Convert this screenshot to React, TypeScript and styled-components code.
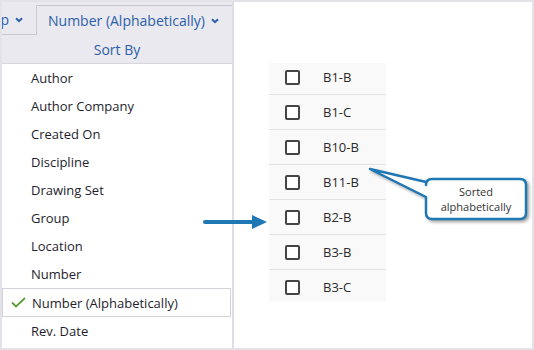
import React from "react";
import styled, { createGlobalStyle, css } from "styled-components";

const BLUE_TEXT = "#2c5faa";
const ARROW_BLUE = "#1f77b4";

const GlobalStyle = createGlobalStyle`
  html, body {
    margin: 0;
    padding: 0;
    background: #ffffff;
  }
  body {
    font-family: "Open Sans", "Liberation Sans", sans-serif;
  }
`;

const sortOptions = [
    "Author",
    "Author Company",
    "Created On",
    "Discipline",
    "Drawing Set",
    "Group",
    "Location",
    "Number",
    "Number (Alphabetically)",
    "Rev. Date",
];

const sheets = ["B1-B", "B1-C", "B10-B", "B11-B", "B2-B", "B3-B", "B3-C"];

const Frame = styled.div`
  position: relative;
  width: 534px;
  height: 350px;
  box-sizing: border-box;
  border: 2px solid #e2e2e8;
  background: #ffffff;
  display: flex;
  overflow: hidden;
`;

const Sidebar = styled.div`
  width: 230px;
  flex: none;
  border-right: 2px solid #dedee4;
  display: flex;
  flex-direction: column;
`;

const Header = styled.div`
  background: #e9e9ef;
  border-bottom: 1px solid #d6d6dc;
  padding-top: 3px;
`;

const TabRow = styled.div`
  display: flex;
  height: 30px;
`;

const Tab = styled.div<{ $active?: boolean }>`
  display: flex;
  align-items: center;
  gap: 6px;
  color: ${BLUE_TEXT};
  font-size: 14px;
  white-space: nowrap;
  overflow: hidden;
  box-sizing: border-box;
  & > * {
    flex: none;
  }
  ${({ $active }) => $active
    ? css`
      flex: 1;
      justify-content: center;
      border-top: 1px solid #c8c8d0;
      padding-right: 2px;
    `
    : css`
      width: 35px;
      flex: none;
      justify-content: flex-end;
      padding-right: 13px;
      border-right: 1px solid #c8c8d0;
      border-bottom: 1px solid #c8c8d0;
    `}
`;

const SortLabel = styled.div`
  height: 28px;
  display: flex;
  align-items: center;
  justify-content: center;
  color: ${BLUE_TEXT};
  font-size: 14px;
`;

const Menu = styled.div`
  display: flex;
  flex-direction: column;
`;

const MenuItem = styled.div<{ $selected?: boolean }>`
  height: 28px;
  box-sizing: border-box;
  display: flex;
  align-items: center;
  padding-left: 8px;
  font-size: 13px;
  color: #1e1e2e;
  ${({ $selected }) => $selected && css`
    border: 1px solid #d2d2da;
    height: 29px;
    margin-right: 1px;
  `}
`;

const CheckSlot = styled.span`
  width: 21px;
  display: flex;
  align-items: center;
`;

const Canvas = styled.div`
  flex: 1;
  padding: 61px 0 0 35px;
`;

const SheetList = styled.div`
  width: 117px;
  height: 239px;
  overflow: hidden;
  background: #f9f9f9;
`;

const SheetRows = styled.div`
  margin-top: -3px;
`;

const SheetRow = styled.div`
  height: 35px;
  box-sizing: border-box;
  border-bottom: 1px solid #e2e2e2;
  display: flex;
  align-items: center;
  padding-left: 16px;
  gap: 23px;
  font-size: 13px;
  color: #2a2a2a;
`;

const Checkbox = styled.span`
  width: 15px;
  height: 15px;
  box-sizing: border-box;
  border: 2px solid #454545;
  border-radius: 2px;
  background: #ffffff;
`;

const PointerArrow = styled.svg`
  position: absolute;
  left: 198px;
  top: 210px;
`;

const CalloutShape = styled.svg`
  position: absolute;
  left: 358px;
  top: 158px;
  overflow: visible;
  filter: drop-shadow(2px 2px 1.5px rgba(0, 0, 0, 0.35));
`;

const CalloutText = styled.div`
  position: absolute;
  left: 424px;
  top: 177px;
  width: 100px;
  height: 40px;
  display: flex;
  flex-direction: column;
  align-items: center;
  justify-content: center;
  font-size: 11px;
  line-height: 15px;
  color: #333333;
`;

const Chevron = () => (
    <svg width="8" height="6" viewBox="0 0 8 6">
        <path d="M1 1.2 L4 4.2 L7 1.2" fill="none" stroke={BLUE_TEXT} strokeWidth="2" />
    </svg>
);

const CheckMark = () => (
    <svg width="15" height="11" viewBox="0 0 15 11">
        <path d="M1 5.5 L5 9.5 L14 1" fill="none" stroke="#5a9e3a" strokeWidth="1.8" />
    </svg>
);

export default function App() {
    const selected = "Number (Alphabetically)";
    return (
        <>
            <GlobalStyle />
            <Frame>
                <Sidebar>
                    <Header>
                        <TabRow>
                            <Tab>
                                <span>Group</span>
                                <Chevron />
                            </Tab>
                            <Tab $active>
                                <span>{selected}</span>
                                <Chevron />
                            </Tab>
                        </TabRow>
                        <SortLabel>Sort By</SortLabel>
                    </Header>
                    <Menu>
                        {sortOptions.map((option) => (
                            <MenuItem key={option} $selected={option === selected}>
                                <CheckSlot>{option === selected && <CheckMark />}</CheckSlot>
                                {option}
                            </MenuItem>
                        ))}
                    </Menu>
                </Sidebar>
                <Canvas>
                    <SheetList>
                        <SheetRows>
                            {sheets.map((sheet) => (
                                <SheetRow key={sheet}>
                                    <Checkbox />
                                    <span>{sheet}</span>
                                </SheetRow>
                            ))}
                        </SheetRows>
                    </SheetList>
                </Canvas>

                <PointerArrow width="70" height="20" viewBox="0 0 70 20">
                    <line x1="5" y1="10" x2="55" y2="10" stroke={ARROW_BLUE} strokeWidth="4" strokeLinecap="round" />
                    <polygon points="52,3 67,10 52,17" fill={ARROW_BLUE} />
                </PointerArrow>

                <CalloutShape width="174" height="66" viewBox="0 0 174 66">
                    <path
                        d="M72 19 H160 Q166 19 166 25 V53 Q166 59 160 59 H72 Q66 59 66 53 V37 L10 9 L66 22 V25 Q66 19 72 19 Z"
                        fill="#ffffff"
                        stroke={ARROW_BLUE}
                        strokeWidth="2.5"
                        strokeLinejoin="round"
                    />
                </CalloutShape>
                <CalloutText>
                    <span>Sorted</span>
                    <span>alphabetically</span>
                </CalloutText>
            </Frame>
        </>
    );
}
